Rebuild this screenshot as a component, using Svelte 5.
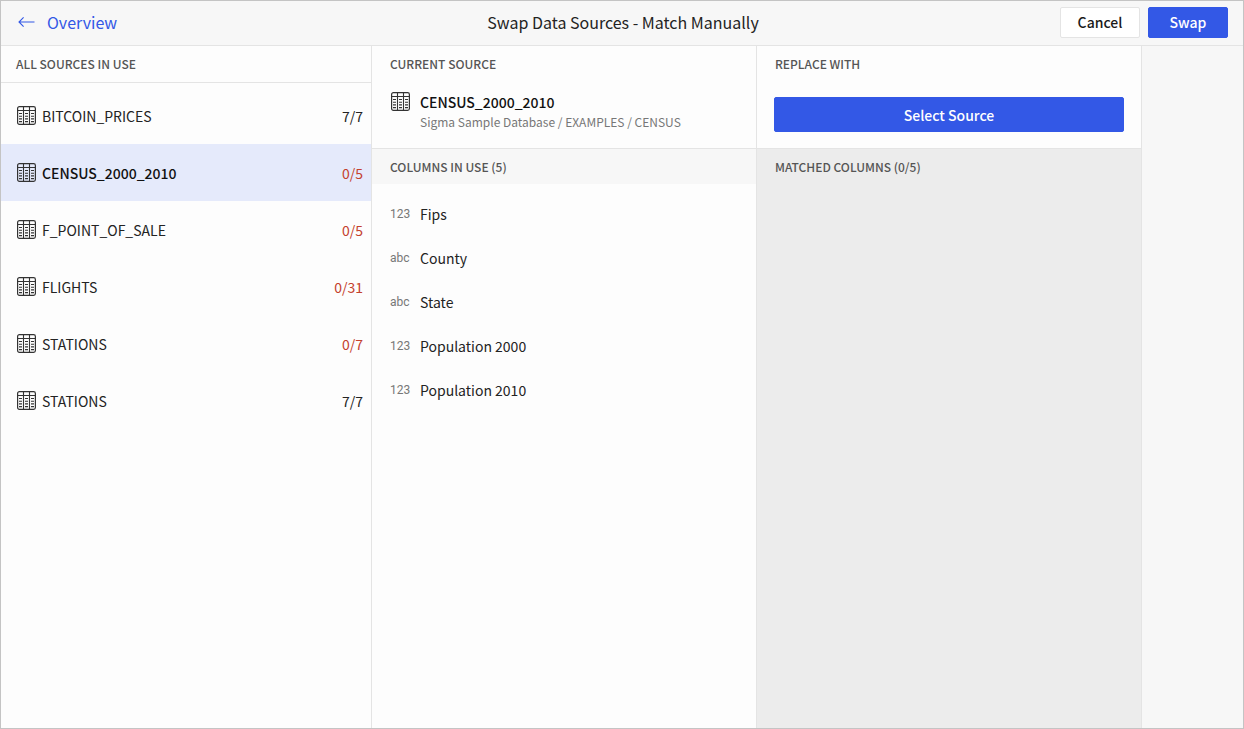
<script lang="ts">
  type Source = { name: string; matched: number; total: number };
  type Column = { name: string; type: 'number' | 'text' };

  const sources: Source[] = [
    { name: 'BITCOIN_PRICES', matched: 7, total: 7 },
    { name: 'CENSUS_2000_2010', matched: 0, total: 5 },
    { name: 'F_POINT_OF_SALE', matched: 0, total: 5 },
    { name: 'FLIGHTS', matched: 0, total: 31 },
    { name: 'STATIONS', matched: 0, total: 7 },
    { name: 'STATIONS', matched: 7, total: 7 },
  ];

  const columns: Column[] = [
    { name: 'Fips', type: 'number' },
    { name: 'County', type: 'text' },
    { name: 'State', type: 'text' },
    { name: 'Population 2000', type: 'number' },
    { name: 'Population 2010', type: 'number' },
  ];

  let selected = $state(1);
</script>

{#snippet tableIcon()}
  <svg class="table-icon" viewBox="0 0 19 19" width="19" height="19" fill="none" stroke="currentColor" aria-hidden="true">
    <rect x="0.6" y="0.6" width="17.8" height="17.8" rx="1.8" stroke-width="1.2" />
    <path d="M0.6 4.5H18.4M6.5 0.6V18.4M12.5 0.6V18.4" stroke-width="1.1" />
    <path d="M2 7.5H5M8 7.5H11M14 7.5H17M2 10.2H5M8 10.2H11M14 10.2H17M2 12.9H5M8 12.9H11M14 12.9H17M2 15.6H5M8 15.6H11M14 15.6H17" stroke-width="1.1" />
  </svg>
{/snippet}

<div class="dialog">
  <header class="topbar">
    <a class="back" href="#overview">
      <svg viewBox="0 0 17 12" width="17" height="12" fill="none" stroke="currentColor" stroke-width="1.1" aria-hidden="true">
        <path d="M16.5 6H1.2M5.6 1.4L1 6L5.6 10.6" />
      </svg>
      Overview
    </a>
    <h1>Swap Data Sources - Match Manually</h1>
    <div class="actions">
      <button type="button" class="button">Cancel</button>
      <button type="button" class="button primary">Swap</button>
    </div>
  </header>

  <main class="panels">
    <section class="panel">
      <h2 class="ruled">ALL SOURCES IN USE</h2>
      <ul class="sources">
        {#each sources as source, i}
          <li>
            <button type="button" class="source" class:selected={selected === i} onclick={() => (selected = i)}>
              {@render tableIcon()}
              <span class="name">{source.name}</span>
              <span class="count" class:incomplete={source.matched < source.total}>{source.matched}/{source.total}</span>
            </button>
          </li>
        {/each}
      </ul>
    </section>

    <section class="panel">
      <div class="panel-top">
        <h2>CURRENT SOURCE</h2>
        <div class="current">
          {@render tableIcon()}
          <div>
            <strong>{sources[selected].name}</strong>
            <p>Sigma Sample Database / EXAMPLES / CENSUS</p>
          </div>
        </div>
      </div>
      <h2 class="strip">COLUMNS IN USE ({columns.length})</h2>
      <ul class="columns">
        {#each columns as column}
          <li>
            <span class="type">{column.type === 'number' ? '123' : 'abc'}</span>
            <span>{column.name}</span>
          </li>
        {/each}
      </ul>
    </section>

    <section class="panel matched">
      <div class="panel-top">
        <h2>REPLACE WITH</h2>
        <div class="replace">
          <button type="button" class="button primary wide">Select Source</button>
        </div>
      </div>
      <h2>MATCHED COLUMNS (0/{columns.length})</h2>
    </section>
  </main>
</div>

<style>
  :global(body) {
    margin: 0;
  }

  .dialog {
    box-sizing: border-box;
    min-height: 100vh;
    display: flex;
    flex-direction: column;
    border: 1px solid #c4c4c4;
    background: #f7f7f7;
    color: #232323;
    font-family: "Noto Sans CJK SC", "Noto Sans", sans-serif;
    font-size: 14px;
    line-height: 20px;
  }

  .topbar {
    display: grid;
    grid-template-columns: 1fr auto 1fr;
    align-items: center;
    height: 42px;
    padding: 0 15px 2px 17px;
    border-bottom: 1px solid #e4e4e4;
  }

  .back {
    display: flex;
    align-items: center;
    gap: 12px;
    color: #3358e6;
    font-size: 16px;
    text-decoration: none;
  }

  h1 {
    margin: 0;
    font-size: 16px;
    font-weight: 400;
  }

  .actions {
    display: flex;
    justify-content: flex-end;
    gap: 8px;
  }

  .button {
    box-sizing: border-box;
    min-width: 80px;
    height: 31px;
    padding: 0 12px;
    border: 1px solid #e4e4e4;
    border-radius: 2px;
    background: #fff;
    color: #1a1a1a;
    font: inherit;
    font-weight: 500;
    cursor: pointer;
  }

  .primary {
    border-color: #3358e6;
    background: #3358e6;
    color: #fff;
  }

  .wide {
    width: 100%;
    height: 35px;
  }

  .panels {
    flex: 1;
    display: grid;
    grid-template-columns: 371fr 385fr 385fr 101fr;
  }

  .panel {
    min-width: 0;
    border-right: 1px solid #e4e4e4;
    background: #fdfdfd;
  }

  .matched {
    background: #ececec;
  }

  h2 {
    box-sizing: border-box;
    height: 35px;
    margin: 0;
    padding: 0 18px;
    color: #555;
    font-size: 12px;
    font-weight: 500;
    line-height: 35px;
  }

  .ruled {
    height: 37px;
    padding: 0 15px;
    border-bottom: 1px solid #e4e4e4;
  }

  .strip {
    background: #f7f7f7;
  }

  .panel-top {
    box-sizing: border-box;
    height: 103px;
    border-bottom: 1px solid #e4e4e4;
    background: #fdfdfd;
  }

  ul {
    margin: 0;
    padding: 0;
    list-style: none;
  }

  .sources {
    padding-top: 4px;
  }

  .source {
    display: flex;
    align-items: center;
    gap: 6px;
    width: 100%;
    height: 57px;
    padding: 0 8px 0 16px;
    border: 0;
    background: transparent;
    color: inherit;
    font: inherit;
    text-align: left;
    cursor: pointer;
  }

  .selected {
    background: #e5eafb;
  }

  .selected .name,
  strong {
    color: #111;
    font-weight: 500;
  }

  .name {
    flex: 1;
  }

  .incomplete {
    color: #c4412d;
  }

  .table-icon {
    flex: none;
    color: #333;
  }

  .current {
    display: flex;
    align-items: flex-start;
    gap: 10px;
    padding: 11px 19px;
  }

  .current strong {
    display: block;
  }

  .current p {
    margin: 0;
    color: #777;
    font-size: 12px;
  }

  .replace {
    padding: 16px 17px;
  }

  .columns {
    padding-top: 8px;
  }

  .columns li {
    display: flex;
    align-items: center;
    height: 44px;
    padding: 0 18px;
  }

  .type {
    width: 30px;
    color: #777;
    font-family: Roboto, sans-serif;
    font-size: 12px;
  }
</style>
